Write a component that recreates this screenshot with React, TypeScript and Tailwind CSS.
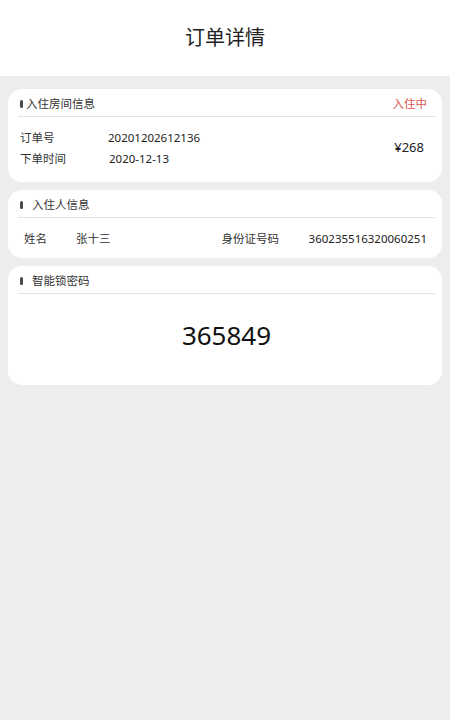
const font = { fontFamily: '"Noto Sans", "Noto Sans CJK SC", sans-serif' }

function CardHead({ title, gap, right }: { title: string; gap: string; right?: string }) {
  return (
    <div className="flex h-[28px] items-center border-b border-[#e3e3e3] pt-[2px]">
      <span className="ml-[2px] h-[8px] w-[3px] rounded-full bg-[#4a4a4a]" />
      <span className={`${gap} text-[11.5px] text-[#333]`}>{title}</span>
      {right ? (
        <span className="ml-auto mr-[8px] text-[11.5px] text-[#d9534f]">{right}</span>
      ) : null}
    </div>
  )
}

export default function App() {
  return (
    <div className="min-h-[720px] bg-[#ededed]" style={font}>
      <div className="flex h-[76px] items-center justify-center bg-white">
        <h1 className="text-[20px] font-normal text-[#222]">订单详情</h1>
      </div>

      <div className="flex flex-col gap-[8px] px-[8px] pt-[13px]">
        <div className="rounded-[14px] bg-white pl-[10px] pr-[7px]">
          <CardHead title="入住房间信息" gap="ml-[3px]" right="入住中" />
          <div className="flex items-center pb-[13px] pt-[10px]">
            <div className="flex flex-col text-[11.5px] text-[#333]">
              <div className="flex h-[21px] items-center">
                <span className="w-[90px] pl-[2px]">订单号</span>
                <span className="text-[11.5px] text-[#222]">20201202612136</span>
              </div>
              <div className="flex h-[21px] items-center">
                <span className="w-[91px] pl-[2px]">下单时间</span>
                <span className="text-[11.5px] text-[#222]">2020-12-13</span>
              </div>
            </div>
            <span className="ml-auto mr-[11px] text-[13px] text-[#222]">¥268</span>
          </div>
        </div>

        <div className="rounded-[14px] bg-white pl-[10px] pr-[7px]">
          <CardHead title="入住人信息" gap="ml-[9px]" />
          <div className="flex h-[40px] items-center pt-[2px] text-[11.5px] text-[#333]">
            <span className="w-[58px] pl-[6px]">姓名</span>
            <span>张十三</span>
            <span className="ml-auto w-[87px]">身份证号码</span>
            <span className="mr-[8px] text-[11.5px] text-[#222]">360235516320060251</span>
          </div>
        </div>

        <div className="rounded-[14px] bg-white pl-[10px] pr-[7px]">
          <CardHead title="智能锁密码" gap="ml-[9px]" />
          <div className="flex h-[91px] items-center justify-center pb-[8px]">
            <span className="text-[26px] text-[#111]">365849</span>
          </div>
        </div>
      </div>
    </div>
  )
}
